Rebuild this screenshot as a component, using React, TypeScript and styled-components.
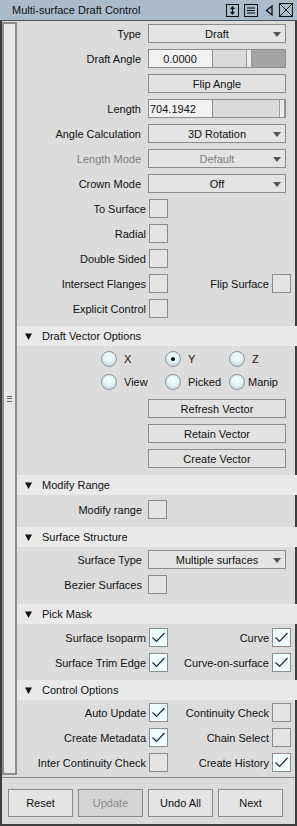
import React from 'react';
import styled, { createGlobalStyle } from 'styled-components';

const GlobalStyle = createGlobalStyle`
  html, body {
    margin: 0;
    padding: 0;
    background: #dcdcdc;
  }
  body {
    font-family: "Liberation Sans", Arial, sans-serif;
    font-size: 11px;
    color: #111;
  }
  * {
    box-sizing: border-box;
  }
`;

const Window = styled.div`
  width: 297px;
  height: 826px;
  display: flex;
  flex-direction: column;
  background: #dcdcdc;
`;

const TitleBar = styled.div`
  height: 21px;
  flex: none;
  display: flex;
  align-items: center;
  padding: 0 4px 0 12px;
  background: #aabbcb;
  border-bottom: 1px solid #4d5258;
`;

const TitleText = styled.div`
  flex: 1;
  color: #111;
`;

const TitleIcons = styled.div`
  display: flex;
  align-items: center;
  gap: 4px;
`;

const Frame = styled.div`
  flex: 1;
  display: flex;
  flex-direction: column;
  border-left: 2px solid #3e3e3e;
  border-right: 2px solid #3e3e3e;
  border-bottom: 2px solid #3e3e3e;
  min-height: 0;
`;

const Body = styled.div`
  flex: 1;
  display: flex;
  min-height: 0;
`;

const Sidebar = styled.div`
  width: 15px;
  flex: none;
  margin: 1px 0 2px;
  background: #e6e6e6;
  border: 2px solid #8d8d8d;
  display: flex;
  align-items: center;
  justify-content: center;
`;

const Grip = styled.div`
  width: 5px;
  height: 6px;
  border-top: 1px solid #666;
  border-bottom: 1px solid #666;
  position: relative;
  &::after {
    content: '';
    position: absolute;
    left: 0;
    right: 0;
    top: 1.5px;
    border-top: 1px solid #666;
  }
`;

const Content = styled.div`
  flex: 1;
  display: flex;
  flex-direction: column;
`;

const SectionBody = styled.div<{ $pt: number; $pb: number }>`
  display: flex;
  flex-direction: column;
  gap: 6px;
  padding: ${p => p.$pt}px 9px ${p => p.$pb}px 0;
`;

const SectionHeader = styled.div`
  height: 20px;
  flex: none;
  display: flex;
  align-items: center;
  gap: 10px;
  padding-left: 8px;
  background: #eaeaea;
  color: #111;
`;

const Row = styled.div`
  display: flex;
  align-items: center;
  height: 19px;
`;

const Label = styled.div<{ $pad: number; $dim?: boolean }>`
  width: 131px;
  flex: none;
  text-align: right;
  padding-right: ${p => p.$pad}px;
  white-space: nowrap;
  color: ${p => (p.$dim ? '#808080' : '#111')};
`;

const Field = styled.div`
  width: 138px;
  height: 19px;
  border: 1px solid #8c8c8c;
  background: #e4e4e4;
`;

const DropdownBox = styled(Field)<{ $dim?: boolean }>`
  position: relative;
  display: flex;
  align-items: center;
  justify-content: center;
  color: ${p => (p.$dim ? '#808080' : '#111')};
`;

const Arrow = styled.svg`
  position: absolute;
  right: 4px;
  top: 7px;
`;

const PushButton = styled(Field)`
  display: flex;
  align-items: center;
  justify-content: center;
  background: #e2e2e2;
`;

const SliderField = styled.div`
  width: 138px;
  height: 19px;
  display: flex;
`;

const NumberInput = styled.div<{ $align: string }>`
  width: 65px;
  flex: none;
  height: 19px;
  border: 1px solid #8c8c8c;
  background: #f2f2f2;
  display: flex;
  align-items: center;
  justify-content: ${p => p.$align};
  padding: 0 2px 0 1px;
`;

const Track = styled.div`
  flex: 1;
  display: flex;
  height: 19px;
  border: 1px solid #8c8c8c;
  border-left: none;
  background: #dadada;
`;

const TrackRest = styled.div`
  flex: 1;
`;

const Thumb = styled.div`
  width: 6px;
  flex: none;
  background: #ececec;
  border-left: 1px solid #9a9a9a;
  border-right: 1px solid #9a9a9a;
`;

const TrackFill = styled.div<{ $w: number }>`
  width: ${p => p.$w}px;
  flex: none;
  background: #a4a4a4;
`;

const Box = styled.div<{ $on?: boolean; $ml: number }>`
  width: 19px;
  height: 19px;
  flex: none;
  margin-left: ${p => p.$ml}px;
  border: 1px solid #8c8c8c;
  background: ${p => (p.$on ? '#effeff' : '#e4e4e4')};
  display: flex;
  align-items: center;
  justify-content: center;
`;

const RightCell = styled.div`
  flex: 1;
  display: flex;
  justify-content: flex-end;
  align-items: center;
  padding-right: 2px;
  white-space: nowrap;
`;

const RadioGrid = styled.div`
  display: grid;
  grid-template-columns: repeat(3, 64px);
  row-gap: 6px;
  margin-left: 84px;
  margin-bottom: 3px;
`;

const RadioItem = styled.div`
  display: flex;
  align-items: center;
  gap: 7px;
  height: 17px;
  white-space: nowrap;
`;

const RadioDot = styled.div<{ $on?: boolean }>`
  width: 16px;
  height: 16px;
  flex: none;
  border-radius: 50%;
  border: 1px solid #8e989c;
  background: radial-gradient(circle at 50% 38%, #fbffff 0%, #e2f2f4 45%, #b9c8cc 100%);
  display: flex;
  align-items: center;
  justify-content: center;
  &::after {
    content: '';
    width: 4px;
    height: 4px;
    border-radius: 50%;
    background: ${p => (p.$on ? '#000' : 'transparent')};
  }
`;

const Footer = styled.div`
  flex: none;
  height: 47px;
  border-top: 1px solid #8a8a8a;
  display: flex;
  gap: 5px;
  padding: 11px 0 0 6px;
`;

const FooterButton = styled.div<{ $dim?: boolean }>`
  width: 65px;
  height: 28px;
  border: 1px solid #8a8a8a;
  background: ${p => (p.$dim ? '#d4d4d4' : '#e4e4e4')};
  color: ${p => (p.$dim ? '#8a8a8a' : '#111')};
  display: flex;
  align-items: center;
  justify-content: center;
`;

const Check = () => (
  <svg width="15" height="13" viewBox="0 0 15 13">
    <path d="M1.5 6.5 L5.5 10.5 L13.5 2" fill="none" stroke="#1c2638" strokeWidth="1.2" />
  </svg>
);

const Checkbox: React.FC<{ on?: boolean; ml?: number }> = ({ on, ml = 1 }) => (
  <Box $on={on} $ml={ml}>
    {on && <Check />}
  </Box>
);

const Dropdown: React.FC<{ value: string; dim?: boolean }> = ({ value, dim }) => (
  <DropdownBox $dim={dim}>
    {value}
    <Arrow width="8" height="5" viewBox="0 0 8 5">
      <path d="M0 0 H8 L4 5 Z" fill="#555" />
    </Arrow>
  </DropdownBox>
);

const Triangle = () => (
  <svg width="7" height="7" viewBox="0 0 7 7">
    <path d="M0 0.5 H7 L3.5 7 Z" fill="#111" />
  </svg>
);

const Header: React.FC<{ title: string }> = ({ title }) => (
  <SectionHeader>
    <Triangle />
    {title}
  </SectionHeader>
);

const TwinRow: React.FC<{ left: string; leftOn?: boolean; right: string; rightOn?: boolean }> = ({
  left,
  leftOn,
  right,
  rightOn,
}) => (
  <Row>
    <Label $pad={2}>{left}</Label>
    <Checkbox on={leftOn} />
    <RightCell>
      {right}
      <Checkbox on={rightOn} ml={3} />
    </RightCell>
  </Row>
);

const App: React.FC = () => {
  return (
    <>
      <GlobalStyle />
      <Window>
        <TitleBar>
          <TitleText>Multi-surface Draft Control</TitleText>
          <TitleIcons>
            <svg width="13" height="13" viewBox="0 0 13 13">
              <rect x="0.5" y="0.5" width="12" height="12" fill="none" stroke="#111" />
              <path d="M6.5 2 L9 5 H4 Z M6.5 11 L9 8 H4 Z" fill="#111" />
              <path d="M6.5 4 V9" stroke="#111" strokeWidth="1.4" />
            </svg>
            <svg width="14" height="13" viewBox="0 0 14 13" style={{ marginLeft: 1 }}>
              <rect x="0.5" y="0.5" width="13" height="12" fill="none" stroke="#111" />
              <path d="M3 4 H11 M3 6.5 H11 M3 9 H11" stroke="#111" />
            </svg>
            <svg width="10" height="13" viewBox="0 0 10 13" style={{ marginLeft: 2 }}>
              <path d="M8 2 L2.5 6.5 L8 11 Z" fill="none" stroke="#111" strokeWidth="1.3" />
            </svg>
            <svg width="14" height="14" viewBox="0 0 14 14" style={{ marginLeft: 1 }}>
              <rect x="0.5" y="0.5" width="13" height="13" fill="none" stroke="#111" />
              <path d="M1 1 L13 13 M13 1 L1 13" stroke="#111" />
            </svg>
          </TitleIcons>
        </TitleBar>
        <Frame>
          <Body>
            <Sidebar>
              <Grip />
            </Sidebar>
            <Content>
              <SectionBody $pt={3} $pb={8}>
                <Row>
                  <Label $pad={7}>Type</Label>
                  <Dropdown value="Draft" />
                </Row>
                <Row>
                  <Label $pad={7}>Draft Angle</Label>
                  <SliderField>
                    <NumberInput $align="center">0.0000</NumberInput>
                    <Track>
                      <TrackRest />
                      <Thumb />
                      <TrackFill $w={33} />
                    </Track>
                  </SliderField>
                </Row>
                <Row>
                  <Label $pad={7} />
                  <PushButton>Flip Angle</PushButton>
                </Row>
                <Row>
                  <Label $pad={7}>Length</Label>
                  <SliderField>
                    <NumberInput $align="flex-start">704.1942</NumberInput>
                    <Track>
                      <TrackRest />
                      <Thumb />
                      <TrackFill $w={0} />
                    </Track>
                  </SliderField>
                </Row>
                <Row>
                  <Label $pad={7}>Angle Calculation</Label>
                  <Dropdown value="3D Rotation" />
                </Row>
                <Row>
                  <Label $pad={7} $dim>
                    Length Mode
                  </Label>
                  <Dropdown value="Default" dim />
                </Row>
                <Row>
                  <Label $pad={7}>Crown Mode</Label>
                  <Dropdown value="Off" />
                </Row>
                <Row>
                  <Label $pad={2}>To Surface</Label>
                  <Checkbox />
                </Row>
                <Row>
                  <Label $pad={2}>Radial</Label>
                  <Checkbox />
                </Row>
                <Row>
                  <Label $pad={2}>Double Sided</Label>
                  <Checkbox />
                </Row>
                <TwinRow left="Intersect Flanges" right="Flip Surface" />
                <Row>
                  <Label $pad={2}>Explicit Control</Label>
                  <Checkbox />
                </Row>
              </SectionBody>

              <Header title="Draft Vector Options" />
              <SectionBody $pt={4} $pb={7}>
                <RadioGrid>
                  <RadioItem>
                    <RadioDot />X
                  </RadioItem>
                  <RadioItem>
                    <RadioDot $on />Y
                  </RadioItem>
                  <RadioItem>
                    <RadioDot />Z
                  </RadioItem>
                  <RadioItem>
                    <RadioDot />View
                  </RadioItem>
                  <RadioItem>
                    <RadioDot />Picked
                  </RadioItem>
                  <RadioItem style={{ gap: 3 }}>
                    <RadioDot />Manip
                  </RadioItem>
                </RadioGrid>
                <Row>
                  <Label $pad={7} />
                  <PushButton>Refresh Vector</PushButton>
                </Row>
                <Row>
                  <Label $pad={7} />
                  <PushButton>Retain Vector</PushButton>
                </Row>
                <Row>
                  <Label $pad={7} />
                  <PushButton>Create Vector</PushButton>
                </Row>
              </SectionBody>

              <Header title="Modify Range" />
              <SectionBody $pt={5} $pb={8}>
                <Row>
                  <Label $pad={6}>Modify range</Label>
                  <Checkbox ml={0} />
                </Row>
              </SectionBody>

              <Header title="Surface Structure" />
              <SectionBody $pt={3} $pb={10}>
                <Row>
                  <Label $pad={6}>Surface Type</Label>
                  <Dropdown value="Multiple surfaces" />
                </Row>
                <Row>
                  <Label $pad={6}>Bezier Surfaces</Label>
                  <Checkbox ml={0} />
                </Row>
              </SectionBody>

              <Header title="Pick Mask" />
              <SectionBody $pt={4} $pb={8}>
                <TwinRow left="Surface Isoparm" leftOn right="Curve" rightOn />
                <TwinRow left="Surface Trim Edge" leftOn right="Curve-on-surface" rightOn />
              </SectionBody>

              <Header title="Control Options" />
              <SectionBody $pt={3} $pb={4}>
                <TwinRow left="Auto Update" leftOn right="Continuity Check" />
                <TwinRow left="Create Metadata" leftOn right="Chain Select" />
                <TwinRow left="Inter Continuity Check" right="Create History" rightOn />
              </SectionBody>
            </Content>
          </Body>
          <Footer>
            <FooterButton>Reset</FooterButton>
            <FooterButton $dim>Update</FooterButton>
            <FooterButton>Undo All</FooterButton>
            <FooterButton>Next</FooterButton>
          </Footer>
        </Frame>
      </Window>
    </>
  );
};

export default App;
